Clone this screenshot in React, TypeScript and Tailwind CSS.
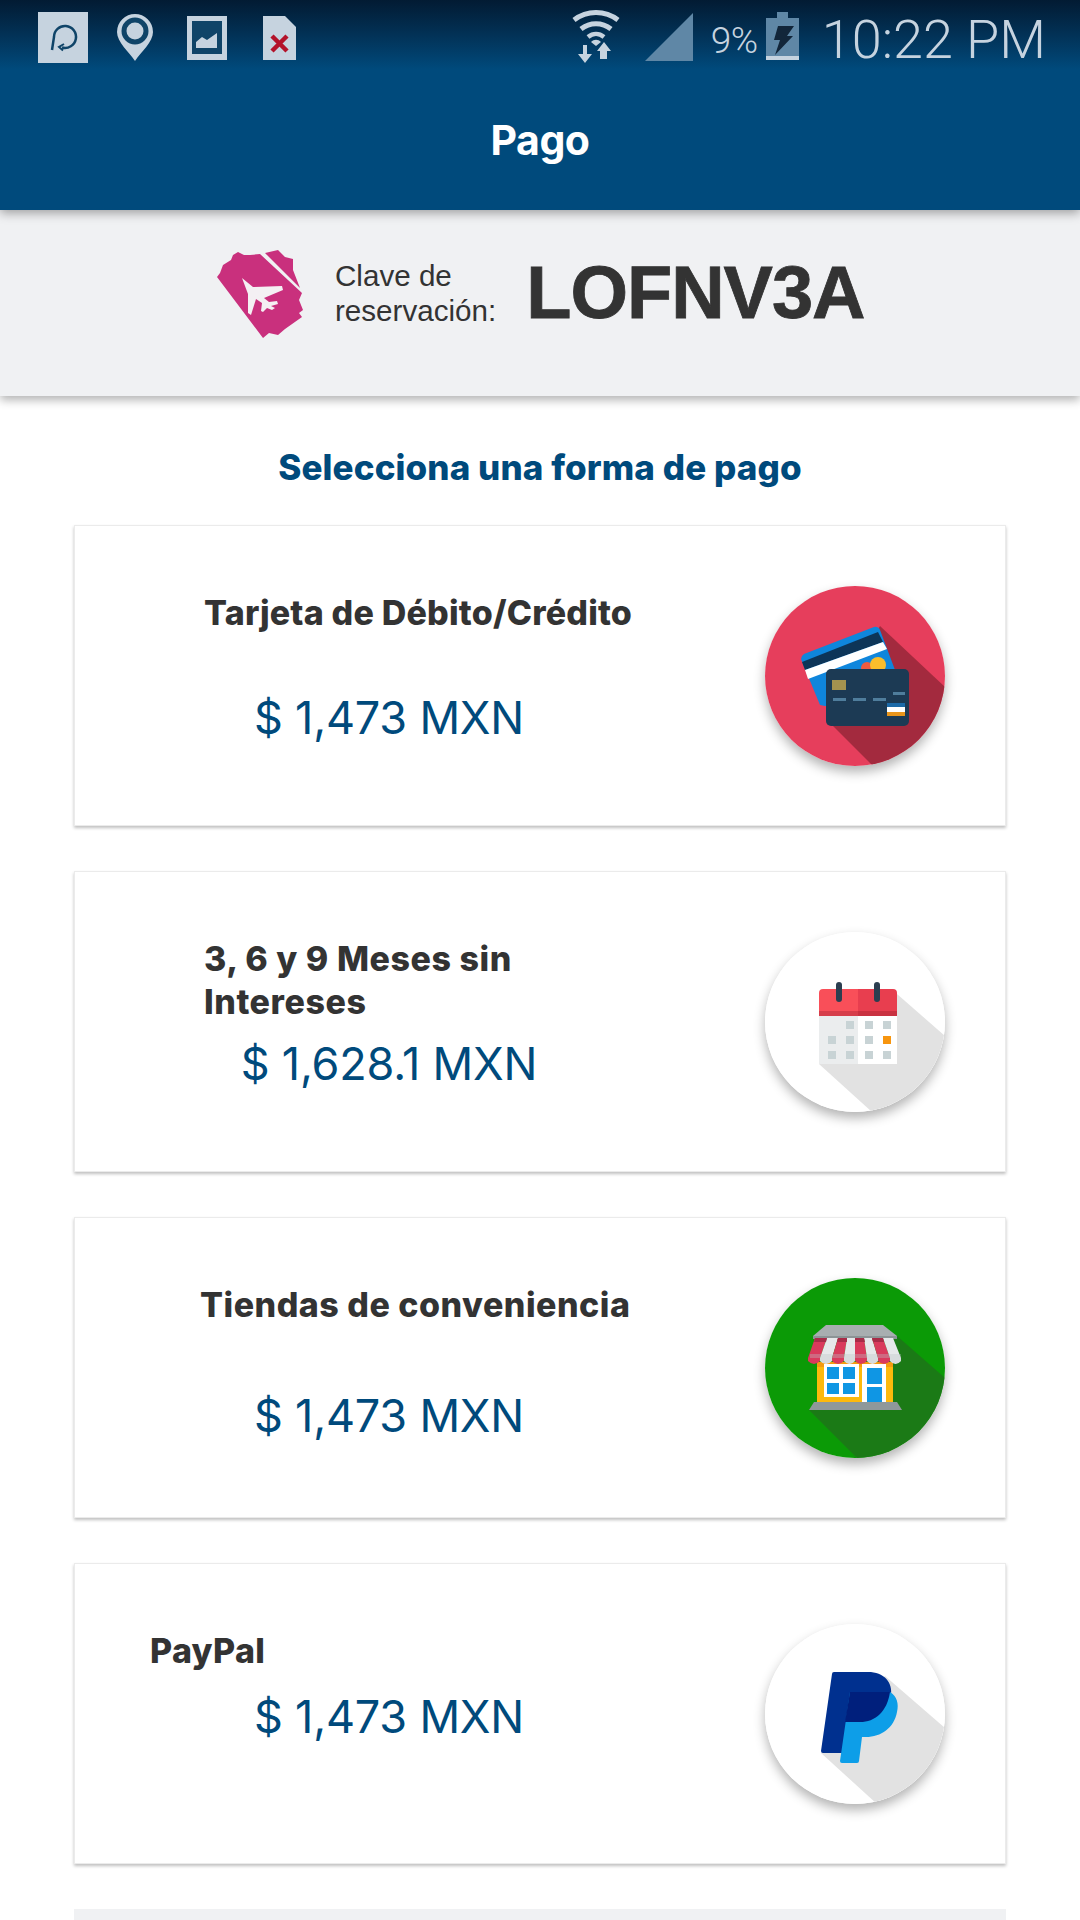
const iconColor = "#c6d3df";

function StatusLeft() {
  return (
    <div className="flex items-start ml-[38px] gap-[29px]">
      <svg width="50" height="70" viewBox="0 0 50 70">
        <rect x="0" y="12" width="50" height="51" fill={iconColor} />
        <path d="M14 50 L16 37 A11 11 0 1 1 24 47.5" fill="none" stroke="#0f4468" strokeWidth="2.5" />
        <path d="M26 44 L21 47 L25 50.5" fill="none" stroke="#0f4468" strokeWidth="2" />
      </svg>
      <svg width="36" height="70" viewBox="0 0 36 70">
        <path d="M18 14 A18 18 0 0 1 36 32 C36 42 24 52 18 61 C12 52 0 42 0 32 A18 18 0 0 1 18 14 Z" fill={iconColor} />
        <circle cx="18" cy="31" r="11" fill="none" stroke="#0f4468" strokeWidth="5" />
      </svg>
      <svg width="40" height="70" viewBox="0 0 40 70" className="ml-[5px]">
        <rect x="0" y="16" width="40" height="44" fill={iconColor} />
        <rect x="5" y="21" width="30" height="33" fill="#0f4468" />
        <path d="M9 48 V42 L15 37 L20 40 L30 33 V48 Z" fill={iconColor} />
      </svg>
      <svg width="33" height="70" viewBox="0 0 33 70" className="ml-[7px]">
        <path d="M0 16 H22 L33 27 V60 H0 Z" fill={iconColor} />
        <path d="M9 36 L24 51 M24 36 L9 51" stroke="#b3122a" strokeWidth="4.5" />
      </svg>
    </div>
  );
}

function StatusRight() {
  return (
    <div className="flex items-start mr-[34px]">
      <svg width="50" height="70" viewBox="0 0 50 70">
        <path d="M3 20 C16 10 34 10 47 20" fill="none" stroke={iconColor} strokeWidth="5" />
        <path d="M10 29 C19 22 31 22 40 29" fill="none" stroke={iconColor} strokeWidth="5" />
        <path d="M17 37 C22 33 28 33 33 37" fill="none" stroke={iconColor} strokeWidth="4.5" />
        <path d="M20 42 C23 39 27 39 30 42 L25 46 Z" fill={iconColor} />
        <path d="M16 45 V54 H21 L14 63 L7 54 H12 V45 Z" fill={iconColor} />
        <path d="M33 42 L40 51 H36 V59 H29 V51 H26 Z" fill={iconColor} />
      </svg>
      <svg width="48" height="70" viewBox="0 0 48 70" className="ml-[24px]">
        <path d="M48 13 V61 H0 Z" fill="#5f87a6" />
      </svg>
      <span className="ml-[18px] mt-[19px] font-['Roboto',sans-serif] font-light text-[37px] leading-[44px] text-[#c6d3df] tracking-[-0.5px]">9%</span>
      <svg width="33" height="70" viewBox="0 0 33 70" className="ml-[8px]">
        <rect x="11" y="12" width="11" height="6" fill="#5f87a6" />
        <rect x="0" y="18" width="33" height="38" fill="#5f87a6" />
        <rect x="0" y="56" width="33" height="4" fill={iconColor} />
        <path d="M12 26 H28 L21 36 H27 L9 55 L14 40 H8 Z" fill="#12263a" />
      </svg>
      <span className="ml-[23px] mt-[8px] font-['Roboto',sans-serif] font-light text-[54px] leading-[64px] text-[#c6d3df]">10:22 PM</span>
    </div>
  );
}

function TicketIcon() {
  return (
    <svg width="87" height="90" viewBox="0 0 87 90">
      <path d="M21 2 L27 5 L33 5 L43 4 L85 43 L82 50 L86 60 L82 63 L85 67 L68 79 L61 85 L52 83 L46 88 L0 27 L3 23 L6 15 L14 10 L16 5 Z" fill="#c9307d" />
      <path d="M48 3 L61 0 L68 7 L76 9 L76 20 L83 38 Z" fill="#c9307d" />
      <path d="M25 28 L36 37 L65 36 L66 40 L47 48 L52 52 L60 51 L61 54 L54 56 L58 58 L55 60 L50 58 L48 60 L46 62 L44 61 L45 53 L39 49 L34 65 L31 63 L31 44 Z" fill="#f4f0f3" />
    </svg>
  );
}

function CardIcon() {
  return (
    <svg width="180" height="180" viewBox="0 0 180 180">
      <defs>
        <clipPath id="c1">
          <circle cx="90" cy="90" r="90" />
        </clipPath>
      </defs>
      <circle cx="90" cy="90" r="90" fill="#e63e5c" />
      <path d="M115 40 L180 101 V180 H108 L68 140 L80 100 Z" fill="#a32a3e" clipPath="url(#c1)" />
      <path d="M39 68 L109 41 Q113 40 115 44 L130 84 L133 120 L60 120 L55 119 L36 73 Q36 70 39 68 Z" fill="#0f86dc" />
      <path d="M37 76 L113 46 L118 56 L40 84 Z" fill="#0d3558" />
      <path d="M40 84 L118 56 L122 63 L43 93 Z" fill="#ffffff" />
      <circle cx="102" cy="82" r="6" fill="#ef5b3f" />
      <circle cx="113" cy="79" r="8" fill="#f9bd2b" />
      <rect x="61" y="83" width="83" height="57" rx="5" fill="#1c3a54" />
      <rect x="67" y="94" width="14" height="10" fill="#a3924f" />
      <rect x="68" y="112" width="13" height="3" fill="#4f7d9c" />
      <rect x="88" y="112" width="13" height="3" fill="#4f7d9c" />
      <rect x="108" y="112" width="13" height="3" fill="#4f7d9c" />
      <rect x="128" y="106" width="12" height="3" fill="#4f7d9c" />
      <rect x="122" y="117" width="18" height="4" fill="#1c6aa8" />
      <rect x="122" y="121" width="18" height="5" fill="#ffffff" />
      <rect x="122" y="126" width="18" height="4" fill="#e8951c" />
    </svg>
  );
}

function CalendarIcon() {
  const gray = "#c8d3d5";
  return (
    <svg width="180" height="180" viewBox="0 0 180 180">
      <defs>
        <clipPath id="c2">
          <circle cx="90" cy="90" r="90" />
        </clipPath>
      </defs>
      <circle cx="90" cy="90" r="90" fill="#ffffff" />
      <path d="M132 62 L180 104 V180 H107 L54 132 Z" fill="#e2e2e2" clipPath="url(#c2)" />
      <rect x="54" y="78" width="39" height="54" fill="#ebedee" />
      <rect x="93" y="78" width="39" height="54" fill="#ffffff" />
      <path d="M54 84 V61 Q54 57 58 57 H93 V84 Z" fill="#f94f59" />
      <path d="M93 84 V57 H128 Q132 57 132 61 V84 Z" fill="#e83e4f" />
      <rect x="54" y="79" width="39" height="5" fill="#d63e4b" />
      <rect x="93" y="79" width="39" height="5" fill="#c93241" />
      <rect x="71" y="50" width="6" height="20" rx="3" fill="#2c3e50" />
      <rect x="109" y="50" width="6" height="20" rx="3" fill="#2c3e50" />
      <rect x="81" y="89" width="8" height="8" fill={gray} />
      <rect x="100" y="89" width="8" height="8" fill={gray} />
      <rect x="118" y="89" width="8" height="8" fill={gray} />
      <rect x="63" y="104" width="8" height="8" fill={gray} />
      <rect x="81" y="104" width="8" height="8" fill={gray} />
      <rect x="100" y="104" width="8" height="8" fill={gray} />
      <rect x="118" y="104" width="8" height="8" fill="#f7950f" />
      <rect x="63" y="119" width="8" height="8" fill={gray} />
      <rect x="81" y="119" width="8" height="8" fill={gray} />
      <rect x="100" y="119" width="8" height="8" fill={gray} />
      <rect x="118" y="119" width="8" height="8" fill={gray} />
    </svg>
  );
}

// awning stripes: top edge x, bottom edge x
const awning = [
  [50, 62, 43, 55],
  [62, 73, 55, 67],
  [73, 82, 67, 79],
  [82, 90, 79, 90],
  [90, 99, 90, 102],
  [99, 107, 102, 113],
  [107, 118, 113, 125],
  [118, 128, 125, 136],
];

function StoreIcon() {
  return (
    <svg width="180" height="180" viewBox="0 0 180 180">
      <defs>
        <clipPath id="c3">
          <circle cx="90" cy="90" r="90" />
        </clipPath>
      </defs>
      <circle cx="90" cy="90" r="90" fill="#0b9a06" />
      <path d="M132 58 L180 100 V180 H92 L44 132 Z" fill="#1b7a16" clipPath="url(#c3)" />
      <path d="M61 47 H118 L132 58 H48 Z" fill="#a8aeb0" />
      <rect x="48" y="58" width="84" height="3" fill="#8c9496" />
      <rect x="52" y="84" width="76" height="40" fill="#fdb90c" />
      <rect x="52" y="84" width="76" height="5" fill="#f49b10" />
      <rect x="59" y="86" width="35" height="33" fill="#ffffff" />
      <rect x="62" y="89" width="12" height="12" fill="#0f96e4" />
      <rect x="78" y="89" width="12" height="12" fill="#0f96e4" />
      <rect x="62" y="105" width="12" height="11" fill="#0f96e4" />
      <rect x="78" y="105" width="12" height="11" fill="#0f96e4" />
      <rect x="97" y="86" width="24" height="39" fill="#ffffff" />
      <rect x="102" y="90" width="15" height="16" fill="#0f96e4" />
      <rect x="102" y="109" width="15" height="16" fill="#0f96e4" />
      {awning.map(([a, b, c, d], i) => (
        <path
          key={a}
          d={`M${a} 60 H${b} L${d} 80 V83 Q${(c + d) / 2} 89 ${c} 83 V80 Z`}
          fill={i % 2 === 0 ? "#d93a5c" : "#e6e8ea"}
        />
      ))}
      <path d="M45 76 H136 V83 Q130 88 125 83 V80 H113 V83 Q108 88 102 83 V80 H90 V83 Q85 88 79 83 V80 H67 V83 Q61 88 55 83 V80 H45 Z" fill="#b9c2c6" opacity="0.35" />
      <path d="M50 60 H62 L61 64 H49 Z" fill="#a82c48" />
      <path d="M73 60 H82 L82 64 H72 Z" fill="#a82c48" />
      <path d="M90 60 H99 L100 64 H90 Z" fill="#a82c48" />
      <path d="M107 60 H118 L119 64 H108 Z" fill="#a82c48" />
      <path d="M49 124 H132 L137 132 H44 Z" fill="#8f989a" />
    </svg>
  );
}

function PaypalIcon() {
  return (
    <svg width="180" height="180" viewBox="0 0 180 180">
      <defs>
        <clipPath id="c4">
          <circle cx="90" cy="90" r="90" />
        </clipPath>
      </defs>
      <circle cx="90" cy="90" r="90" fill="#ffffff" />
      <path d="M120 52 L180 104 V180 H112 L56 129 Z" fill="#e2e2e2" clipPath="url(#c4)" />
      <path d="M69 48 H103 C119 48 128 58 126 72 C123 90 110 98 95 98 L85 98 L80 129 H58 Q56 129 56 127 L67 50 Q67 48 69 48 Z" fill="#00308f" />
      <path d="M85 68 H125 C132 72 134 80 132 88 C129 104 116 113 101 113 H97 L94 137 Q94 139 92 139 H77 Q75 139 75 137 Z" fill="#0d9ee8" />
      <path d="M85 68 H125 C122 88 110 98 95 98 H80 Z" fill="#001f7c" />
    </svg>
  );
}

const rows = [
  { title: "Tarjeta de Débito/Crédito", price: "$ 1,473 MXN", titleClass: "ml-[129px] tracking-[0.2px]", priceClass: "mt-[59px]", icon: <CardIcon /> },
  { title: "3, 6 y 9 Meses sin Intereses", price: "$ 1,628.1 MXN", titleClass: "ml-[129px] tracking-[0.55px]", priceClass: "mt-[16px]", icon: <CalendarIcon /> },
  { title: "Tiendas de conveniencia", price: "$ 1,473 MXN", titleClass: "ml-[125px] tracking-[0.5px]", priceClass: "mt-[65px]", icon: <StoreIcon /> },
  { title: "PayPal", price: "$ 1,473 MXN", titleClass: "ml-[75px] tracking-[0.35px]", priceClass: "mt-[20px]", icon: <PaypalIcon /> },
];

export default function App() {
  return (
    <div className="w-[1080px] h-[1920px] overflow-hidden bg-white font-['Inter',sans-serif]">
      {/* Top bar */}
      <header className="relative z-20 h-[210px] bg-[#004a7c] bg-gradient-to-b from-[#021b33] to-[#004a7c] to-[33%] shadow-[0_3px_10px_rgba(0,0,0,0.35)]">
        <div className="flex justify-between h-[70px]">
          <StatusLeft />
          <StatusRight />
        </div>
        <h1 className="text-center text-white font-bold text-[41px] leading-[48px] mt-[46px] tracking-[-0.5px]">Pago</h1>
      </header>

      {/* Reservation band */}
      <section className="relative z-10 h-[186px] bg-[#f0f1f3] shadow-[0_4px_9px_rgba(0,0,0,0.3)] flex items-start pl-[217px] pt-[40px]">
        <TicketIcon />
        <div className="ml-[31px] mt-[8px] font-['Liberation_Sans',sans-serif] text-[29.6px] leading-[35px] text-[#333333]">
          Clave de
          <br />
          reservación:
        </div>
        <div className="ml-[30px] -mt-[2px] font-['Liberation_Sans',sans-serif] font-bold text-[74px] leading-[90px] text-[#333333] tracking-[-1px] [-webkit-text-stroke:0.8px_#333333]">LOFNV3A</div>
      </section>

      <h2 className="text-center text-[#004a7c] font-extrabold text-[35px] leading-[42px] mt-[50px] tracking-[0.1px]">Selecciona una forma de pago</h2>

      {/* Payment options */}
      <div className="flex flex-col gap-[45px] mx-[74px] mt-[37px]">
        {rows.map((row) => (
          <div key={row.title} className="h-[301px] flex bg-white border border-[#ebebeb] shadow-[0_2px_3px_rgba(0,0,0,0.25)]">
            <div className="w-[628px] pt-[65px]">
              <div className={"w-[450px] font-extrabold text-[34px] leading-[43px] text-[#333333] " + row.titleClass}>{row.title}</div>
              <div className={"text-center text-[#004a7c] text-[45px] leading-[50px] tracking-[-0.2px] " + row.priceClass}>{row.price}</div>
            </div>
            <div className="ml-[62px] mt-[60px] w-[180px] h-[180px] rounded-full shadow-[0_6px_12px_rgba(0,0,0,0.3)]">{row.icon}</div>
          </div>
        ))}
        <div className="h-[40px] bg-[#f0f1f3]"></div>
      </div>
    </div>
  );
}
